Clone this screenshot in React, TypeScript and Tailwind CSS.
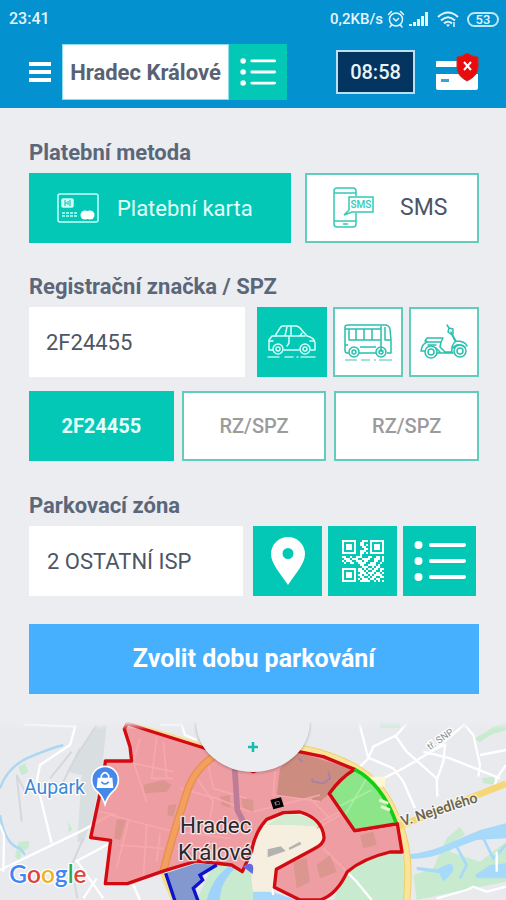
import React from "react";

const QR = [
  "111111100011101111111",
  "100000100110001000001",
  "101110100110101011101",
  "101110100011001011101",
  "101110100001101011101",
  "100000100111001000001",
  "111111100110101111111",
  "000000000100000000000",
  "110010011100011001101",
  "011101110011110011101",
  "101110011101100011001",
  "010011001111001110010",
  "000000000110011110100",
  "000000000011100101100",
  "111111101101011011011",
  "100000101110100110010",
  "101110100111011101101",
  "101110101101101011110",
  "101110100110010110011",
  "100000101011101101100",
  "111111100111110010101",
];

function QrIcon() {
  return (
    <svg viewBox="0 0 21 21" className="size-[42px] fill-white" shapeRendering="crispEdges" aria-hidden="true">
      {QR.flatMap((row, y) =>
        row.split("").map((c, x) => (c === "1" ? <rect key={`${x}-${y}`} x={x} y={y} width="1" height="1" /> : null)),
      )}
    </svg>
  );
}

function ListIcon({ className }: { className: string }) {
  return (
    <svg viewBox="0 0 52 40" className={className} aria-hidden="true">
      <g fill="#fff">
        <circle cx="4.500" cy="4" r="4" />
        <circle cx="4.500" cy="20" r="4" />
        <circle cx="4.500" cy="36" r="4" />
      </g>
      <path d="M17 4H50M17 20H50M17 36H50" stroke="#fff" strokeWidth="4" strokeLinecap="round" />
    </svg>
  );
}

function StatusBar() {
  return (
    <div className="flex h-9 items-center justify-between pl-[9px] pr-[7px] pt-0.5 text-[#e4f6fd]">
      <span className="text-[16px] font-medium">23:41</span>
      <div className="flex items-center gap-1">
        <span className="text-[15px] font-medium">0,2KB/s</span>
        <svg viewBox="0 0 18 18" className="size-[18px]" fill="none" stroke="currentColor" strokeWidth="1.500" strokeLinecap="round" aria-hidden="true">
          <circle cx="9" cy="9.500" r="6.500" />
          <path d="M1.500 4.500L4.500 1.500M16.500 4.500L13.500 1.500M6.500 8.500L9 11L11.500 8.500M4.500 15L3 17M13.500 15L15 17" />
        </svg>
        <svg viewBox="0 0 20 16" className="h-4 w-5" fill="currentColor" aria-hidden="true">
          <path d="M0 13h3v2H0zM4 11h3v4H4zM8 8h3v7H8zM12 5h3v10h-3zM16 1h3v14h-3z" />
        </svg>
        <svg viewBox="0 0 22 18" className="ml-1 h-[18px] w-[22px]" fill="none" stroke="currentColor" strokeWidth="2" aria-hidden="true">
          <path d="M1 7Q11-2 21 7M4 10.500Q11 4 18 10.500M7 13.500Q11 10 15 13.500" />
          <path d="M9 14.500L11 17L13 14.500Z" fill="currentColor" stroke="none" />
          <path d="M17 12v5" strokeWidth="1.500" />
        </svg>
        <span className="ml-1 flex h-[15px] w-8 items-center justify-center rounded-full border-2 border-[#bfe6f6] text-[13px] font-medium leading-none">53</span>
      </div>
    </div>
  );
}

function Header() {
  return (
    <header className="h-[108px] bg-[#0391cf]">
      <StatusBar />
      <div className="flex items-center pl-7 pr-[27px] pt-2">
        <button type="button" aria-label="Menu" className="mr-[9px]">
          <svg viewBox="0 0 25 22" className="h-[22px] w-[25px]" aria-hidden="true">
            <path d="M1 3H23M1 11H23M1 19H23" stroke="#fff" strokeWidth="4" />
          </svg>
        </button>
        <input
          aria-label="Město"
          defaultValue="Hradec Králové"
          className="h-14 w-[167px] border border-[#8fdcec] bg-white text-center text-[22px] font-bold text-[#586274] outline-none"
        />
        <button type="button" aria-label="Seznam měst" className="flex h-14 w-[58px] items-center justify-center bg-[#02c8b5]">
          <ListIcon className="h-[28px] w-[36px]" />
        </button>
        <time className="ml-auto flex h-11 w-[79px] items-center justify-center border-2 border-[#b9dff0] bg-[#033560] text-[20px] font-medium text-[#eaf3f8]">
          08:58
        </time>
        <button type="button" aria-label="Platební karta není ověřena" className="ml-5">
          <svg viewBox="0 0 44 38" className="h-[38px] w-11" aria-hidden="true">
            <path d="M2 8H42V14H1V9Q1 8 2 8Z" fill="#fff" />
            <path d="M1 21H43V35Q43 37 41 37H3Q1 37 1 35Z" fill="#fff" />
            <path d="M6 26H14V29H6Z" fill="#3ba3cf" />
            <path d="M32 0Q38 4 43 4V14Q43 23 32 28Q22 23 22 14V4Q27 4 32 0Z" fill="#e80c0c" stroke="#b8322f" strokeWidth="1" />
            <path d="M29 9L36 17M36 9L29 17" stroke="#fff" strokeWidth="2" />
          </svg>
        </button>
      </div>
    </header>
  );
}

function CardIcon() {
  return (
    <svg viewBox="0 0 42 30" className="h-[30px] w-[42px]" fill="none" stroke="#c5fff8" strokeWidth="1.500" aria-hidden="true">
      <rect x="1" y="1" width="40" height="28" rx="2" />
      <rect x="5" y="6" width="11" height="8" rx="1" fill="#d6fffb" />
      <path d="M8 7V13M13 7V13M8 10H10M11 8V12" stroke="#02b9a9" strokeWidth="1" />
      <path d="M5 20H21M5 23H20" strokeDasharray="3 1" />
      <g fill="#fff" stroke="none">
        <circle cx="28" cy="22" r="4.500" />
        <circle cx="33" cy="22" r="4.500" />
      </g>
    </svg>
  );
}

function SmsIcon() {
  return (
    <svg viewBox="0 0 42 42" className="size-[42px]" fill="none" stroke="#35c9b6" strokeWidth="1.500" aria-hidden="true">
      <path d="M24 9V4Q24 1 21 1H5Q2 1 2 4V37Q2 40 5 40H21Q24 40 24 37V26M2 6H24M2 34H24M11 37H16" />
      <path d="M17 10H41V25H20L12 28L17 23Z" />
      <text x="29" y="21" textAnchor="middle" stroke="none" fill="#35c9b6" className="font-[Roboto,sans-serif] text-[10px] font-medium">SMS</text>
    </svg>
  );
}

function CarIcon() {
  return (
    <svg viewBox="0 0 50 36" className="h-9 w-[50px]" fill="none" stroke="#d5fffa" strokeWidth="1.500" strokeLinejoin="round" strokeLinecap="round" aria-hidden="true">
      <path d="M6 26H2V16L5 12H8L13 4Q14 2 16 2H29Q31 2 33 4L40 12Q48 14 48 19V26H44M17 26H32" />
      <path d="M8 12H38M20 3L18 12M24 2V12M22 12V19L20 22M2 17H6M43 17H47M33 12L35 9" />
      <circle cx="11" cy="25" r="5" />
      <circle cx="11" cy="25" r="2" />
      <circle cx="38" cy="25" r="5" />
      <circle cx="38" cy="25" r="2" />
      <path d="M1 33H12M18 33H26M30 33H31M34 33H48" opacity=".8" />
    </svg>
  );
}

function BusIcon() {
  return (
    <svg viewBox="0 0 50 40" className="h-10 w-[50px]" fill="none" stroke="#2bbfae" strokeWidth="1.500" strokeLinejoin="round" aria-hidden="true">
      <path d="M6 31H4Q2 31 2 28V5Q2 3 5 3H42Q46 3 47 7L48 18V31H44M16 31H33M2 7H38" />
      <path d="M6 7V18H38M13 7V18M21 7V18M29 7V18M38 4V30M42 5V18H48M17 25H33M2 23H5" />
      <circle cx="11" cy="30" r="5" />
      <circle cx="11" cy="30" r="2" />
      <circle cx="38" cy="30" r="5" />
      <circle cx="38" cy="30" r="2" />
      <path d="M2 38H14M18 38H27M31 38H33M36 38H49" opacity=".6" />
    </svg>
  );
}

function ScooterIcon() {
  return (
    <svg viewBox="0 0 50 36" className="h-9 w-[50px]" fill="none" stroke="#2bbfae" strokeWidth="1.500" strokeLinejoin="round" strokeLinecap="round" aria-hidden="true">
      <path d="M6 17L8 14H24L22 18H9ZM8 18Q3 20 2 27H6M22 18L21 23L26 28H33Q32 21 37 17L32 8M18 29H34M17 24L21 28M37 17Q46 17 48 22M34 24Q38 18 46 23" />
      <path d="M28 1L30 4L29 8L33 11L36 17M30 4L34 5V10M9 21H17" />
      <circle cx="12" cy="28" r="6" />
      <circle cx="12" cy="28" r="3" />
      <circle cx="41" cy="27" r="6" />
      <circle cx="41" cy="27" r="3" />
    </svg>
  );
}

function PinIcon() {
  return (
    <svg viewBox="0 0 34 48" className="h-12 w-[34px]" aria-hidden="true">
      <path fillRule="evenodd" d="M17 0A17 17 0 0 1 34 17C34 27 24 37 17 48C10 37 0 27 0 17A17 17 0 0 1 17 0ZM17 11A5.500 5.500 0 1 0 17 22A5.500 5.500 0 1 0 17 11Z" fill="#fff" />
    </svg>
  );
}

const RED_ZONE = "M382 25L450 48L622 102L760 170L893 109L970 125L1064 163Q1020 190 988 236L1064 347L1192 326L1206 411H1170Q1090 430 1042 470Q1010 540 960 555H900L823 517L829 463L940 403Q975 385 972 365Q965 310 900 291L850 293L800 313Q765 350 755 408L727 470L695 450L590 438L496 466L382 506H316L332 376L272 368L297 250L316 142V138H395L390 95L373 42Z";

function ZoneMap() {
  return (
    <svg viewBox="0 21 1518 537" preserveAspectRatio="xMidYMin slice" className="block h-[179px] w-full font-[Roboto,sans-serif]" role="img" aria-label="Mapa parkovacích zón">
      <defs>
        <linearGradient id="fade" x1="0" y1="0" x2="0" y2="1">
          <stop offset="0" stopColor="#ebedf1" />
          <stop offset="1" stopColor="#ebedf1" stopOpacity="0" />
        </linearGradient>
      </defs>
      <rect y="21" width="1518" height="540" fill="#e9eaed" />

      <path d="M290 35L320 30L308 140L280 300L250 385L232 380L245 180L200 170Z" fill="#d9dfe0" />
      <path d="M215 110L150 190M240 100L180 220M290 30L225 130M250 370L215 450L232 550M75 230L50 180L65 320" stroke="#d4d8db" strokeWidth="6" fill="none" />
      <g fill="#c8ebcf">
        <path d="M55 155L75 145L85 170L65 182ZM205 320L217 345L205 352ZM55 380L88 378L85 400L65 410L60 440L45 425Z" />
        <path d="M1140 22H1200V38H1140ZM1425 70L1460 50L1480 35L1518 22V45L1470 60L1440 82ZM1445 190L1480 185L1490 210L1450 205Z" />
        <path d="M1042 470Q1090 430 1170 411H1206L1225 555H1000ZM1240 480L1300 460L1340 370L1380 335L1395 360L1360 380L1350 410L1440 440L1518 380V500L1420 520L1250 555ZM640 450L695 450L727 470L760 450L800 555H590L610 510Z" />
      </g>
      <path d="M0 220Q20 160 80 130Q150 100 190 90M0 300Q15 390 60 400L75 420" stroke="#abd7f5" strokeWidth="7" fill="none" />
      <path d="M695 450Q640 480 620 555H660Q660 500 710 455Z" fill="#9fd3fb" />
      <path d="M759 525L815 530L890 555H759Z" fill="#a6d8fb" />
      <path d="M1210 420Q1290 415 1370 375L1440 345L1518 325V370L1430 375L1350 405Q1290 435 1210 432ZM1250 455L1310 463L1350 445Q1370 460 1350 480L1330 500L1318 475L1250 465ZM1425 480L1470 450L1518 445V490H1430Z" fill="#a7d9fb" />
      <path d="M1370 395L1400 450L1380 490M1450 370L1480 430L1518 390" stroke="#a7d9fb" strokeWidth="8" fill="none" />

      <g stroke="#fff" fill="none" strokeWidth="7">
        <path d="M70 28L226 34L210 90L120 150L110 200L155 385M0 330L12 360L10 470M0 465L240 350L330 300M226 440L330 385M232 440L310 550" />
        <path d="M480 30L545 28L555 60L590 75M290 490L250 550M400 510L420 555" />
        <path d="M1078 25L1105 130L1080 155M1220 26L1190 60L1120 95L1105 128L1180 160L1210 200L1245 280M1060 240L1140 195L1210 160L1310 100L1400 22M1185 60L1220 110L1310 190L1312 245M1310 100L1335 90L1330 140L1312 190M1270 110L1350 130L1500 190M1390 25L1420 60L1440 150L1435 185M1518 150L1490 190L1480 225M1440 120L1518 105" />
        <path d="M970 400L1070 500L1115 555M1310 550L1400 525L1420 515L1460 530L1518 515M1490 410V470M820 540L800 460" />
      </g>
      <path d="M380 22L620 95" stroke="#f8df91" strokeWidth="12" />
      <path d="M893 98Q1000 118 1070 160Q1150 205 1190 310Q1235 400 1220 555" stroke="#efcf6e" strokeWidth="22" fill="none" />
      <path d="M893 98Q1000 118 1070 160Q1150 205 1190 310Q1235 400 1220 555" stroke="#fae49a" strokeWidth="16" fill="none" />
      <path d="M1195 335L1518 206" stroke="#f4d878" strokeWidth="20" />
      <path d="M1110 185H1155V215H1125Z" fill="#fff6d4" />
      <path d="M486 475L500 510L520 555" stroke="#f6df83" strokeWidth="12" fill="none" />
      <path d="M755 500Q750 400 800 313L860 293Q965 290 972 365Q970 400 829 463L815 530H759Z" fill="#f6efdf" />
      <path d="M800 330L850 300Q925 290 960 335L880 330Z" fill="#d3ebd0" />
      <path d="M803 403L842 394L857 408L803 427ZM866 398L900 380L904 388L868 405Z" fill="#b4b2ae" />

      <path d={RED_ZONE} fill="#f1747b" fillOpacity=".65" />
      <path d="M840 160L893 112L1060 163L988 236L960 260L830 245Z" fill="#c08573" opacity=".75" />
      <g fill="#bd8a70" opacity=".4">
        <path d="M430 210L490 195L515 210L500 230L435 235ZM350 315L380 310L360 375L342 370ZM505 270L530 268L520 305L502 300ZM660 245L690 240L692 280L665 270ZM725 250L760 255V288L730 285ZM880 440L920 430L930 500L890 520ZM950 450L990 420L1010 470L960 490ZM1080 360L1120 350L1130 390L1090 400Z" />
      </g>
      <g stroke="#f6a8ac" strokeWidth="5" fill="none">
        <path d="M420 70L400 140L440 260M470 65L455 190L520 190M400 145L520 170M490 80L500 190M330 300L500 345L690 370M360 390L490 400M385 320L350 460M440 330L430 490M540 220L650 250L750 290M620 130L640 220L740 250M590 190L640 260L630 310M480 355L470 440M530 400L680 420M760 290L960 240M825 170L820 240L960 260M960 320L1060 270L1110 230M1020 300L950 340M930 250L990 310M300 290L350 300" />
      </g>
      <path d="M640 125Q575 170 555 250Q515 370 490 468" stroke="#e78e52" strokeWidth="24" fill="none" />
      <path d="M640 125Q575 170 555 250Q515 370 490 468" stroke="#f3a05d" strokeWidth="16" fill="none" />
      <path d="M704 160L712 285L735 330" stroke="#bd7d98" strokeWidth="17" fill="none" />
      <path d="M935 190L940 200L970 205L990 190L985 170M895 130L908 140" stroke="#a783a6" strokeWidth="6" fill="none" />
      <path d={RED_ZONE} fill="none" stroke="#d20b12" strokeWidth="10" strokeLinejoin="round" />

      <path d="M1064 163Q1150 210 1192 326L1064 347L988 236Q1020 190 1064 163Z" fill="#8de58a" />
      <path d="M1015 275L1115 225M1100 190L1035 300" stroke="#a9eea5" strokeWidth="5" />
      <path d="M1192 326L1064 347L988 236Q1020 190 1064 163" fill="none" stroke="#d20b12" strokeWidth="10" strokeLinejoin="round" />
      <path d="M1064 163Q1145 205 1188 322" fill="none" stroke="#12ce13" strokeWidth="11" />
      <path d="M1138 255L1165 265M1143 275L1170 285" stroke="#e8f6d0" strokeWidth="9" />
      <path d="M497 475L590 445L650 450L600 480L608 495L580 520L595 560H530Z" fill="#8298cf" />
      <path d="M525 558L497 475M650 450L600 480L608 495L580 520L595 560" fill="none" stroke="#0e13d2" strokeWidth="10" />
      <path d="M735 455Q760 440 755 470Z" fill="#6569dd" stroke="#6569dd" strokeWidth="8" />
      <path d="M817 258L840 252L846 271L823 277Z" fill="#9b7878" stroke="#000" strokeWidth="9" />
      <path d="M828 262L836 260L838 267L830 269Z" fill="#000" />

      <path d="M315 268Q308 245 292 230Q275 216 275 194A40 40 0 0 1 355 194Q355 216 338 230Q322 245 315 268Z" fill="#4688ea" stroke="#fff" strokeWidth="5" />
      <path d="M293 188H337L340 219H290Z" fill="#fff" />
      <path d="M304 190V182Q315 164 326 182V190" stroke="#fff" strokeWidth="5" fill="none" />
      <path d="M304 200Q315 214 326 200" stroke="#4688ea" strokeWidth="5" fill="none" />

      <g stroke="#fff" strokeWidth="8" strokeLinejoin="round" paintOrder="stroke">
        <text x="72" y="237" className="text-[58px]" fill="#3e87d6">Aupark</text>
        <text x="647" y="355" textAnchor="middle" className="text-[67px]" fill="#28282d" strokeOpacity=".7">Hradec</text>
        <text x="645" y="434" textAnchor="middle" className="text-[67px]" fill="#28282d" strokeOpacity=".7">Králové</text>
        <text x="1208" y="334" transform="rotate(-18 1208 334)" className="text-[43px] font-medium" fill="#66635c" strokeOpacity=".6">V. Nejedlého</text>
        <text x="1290" y="106" transform="rotate(-35 1290 106)" className="text-[29px]" fill="#8c8d90">tř. SNP</text>
        <text x="28" y="503" className="font-[Lato,sans-serif] text-[73px] font-semibold">
          <tspan fill="#4285f4">G</tspan>
          <tspan fill="#df453b">o</tspan>
          <tspan fill="#edb51b">o</tspan>
          <tspan fill="#4285f4">g</tspan>
          <tspan fill="#37a554">l</tspan>
          <tspan fill="#df453b">e</tspan>
        </text>
      </g>
      <rect y="20" width="1518" height="24" fill="url(#fade)" />
    </svg>
  );
}

const label = "mb-1.5 block text-[22px] font-bold leading-7 text-[#5b6779]";
const field = "h-[70px] min-w-0 flex-1 bg-white text-[22px] text-[#4c5666] outline-none";
const solid = "flex h-[70px] items-center justify-center bg-[#02c8b5]";
const outlined = "flex h-[70px] items-center justify-center border-2 border-[#62cdbf] bg-white";

export default function App() {
  return (
    <div className="min-h-screen bg-[#ebedf1] font-[Roboto,sans-serif]">
      <Header />
      <main>
        <form className="pb-7 pl-[29px] pr-[27px] pt-[31px]" onSubmit={(e) => e.preventDefault()}>
          <h2 className={label}>Platební metoda</h2>
          <div className="grid grid-cols-[3fr_2fr] gap-3.5">
            <button type="button" className={`${solid} gap-[18px] pr-2.5 text-[22px] text-[#e5fffc]`}>
              <CardIcon />
              Platební karta
            </button>
            <button type="button" className={`${outlined} gap-[26px] pr-1 text-[23px] text-[#4c5666]`}>
              <SmsIcon />
              SMS
            </button>
          </div>

          <label htmlFor="plate" className={`${label} mt-[30px]`}>Registrační značka / SPZ</label>
          <div className="flex gap-1.5">
            <input id="plate" defaultValue="2F24455" className={`${field} mr-1.5 pl-[17px]`} />
            <button type="button" aria-label="Auto" className={`${solid} w-[70px]`}><CarIcon /></button>
            <button type="button" aria-label="Autobus" className={`${outlined} w-[70px]`}><BusIcon /></button>
            <button type="button" aria-label="Skútr" className={`${outlined} w-[70px]`}><ScooterIcon /></button>
          </div>
          <div className="mt-3.5 grid grid-cols-3 gap-2 text-[20px]">
            <button type="button" className={`${solid} font-bold text-[#e5fffc]`}>2F24455</button>
            <button type="button" className={`${outlined} font-medium text-[#9b9b9b]`}>RZ/SPZ</button>
            <button type="button" className={`${outlined} font-medium text-[#9b9b9b]`}>RZ/SPZ</button>
          </div>

          <label htmlFor="zone" className={`${label} mt-[31px]`}>Parkovací zóna</label>
          <div className="flex gap-1.5 pr-[3px]">
            <input id="zone" defaultValue="2 OSTATNÍ ISP" className={`${field} mr-1 pl-[18px]`} />
            <button type="button" aria-label="Vybrat na mapě" className={`${solid} w-[69px]`}><PinIcon /></button>
            <button type="button" aria-label="Načíst QR kód" className={`${solid} w-[69px]`}><QrIcon /></button>
            <button type="button" aria-label="Seznam zón" className={`${solid} w-[73px]`}><ListIcon className="h-10 w-[52px]" /></button>
          </div>

          <button type="submit" className="mt-7 h-[70px] w-full bg-[#46b0ff] text-[25px] font-bold text-white">
            Zvolit dobu parkování
          </button>
        </form>

        <section className="relative overflow-hidden">
          <ZoneMap />
          <button
            type="button"
            aria-label="Zvětšit mapu"
            className="absolute left-1/2 top-0 flex h-[50px] w-[114px] -translate-x-1/2 items-center justify-center bg-[#ebedf1] shadow-[0_1px_3px_#00000040] [border-radius:0_0_57px_57px/0_0_50px_50px]"
          >
            <svg viewBox="0 0 10 10" className="size-2.5" aria-hidden="true">
              <path d="M5 0V10M0 5H10" stroke="#12bfae" strokeWidth="2.500" />
            </svg>
          </button>
        </section>
      </main>
    </div>
  );
}
